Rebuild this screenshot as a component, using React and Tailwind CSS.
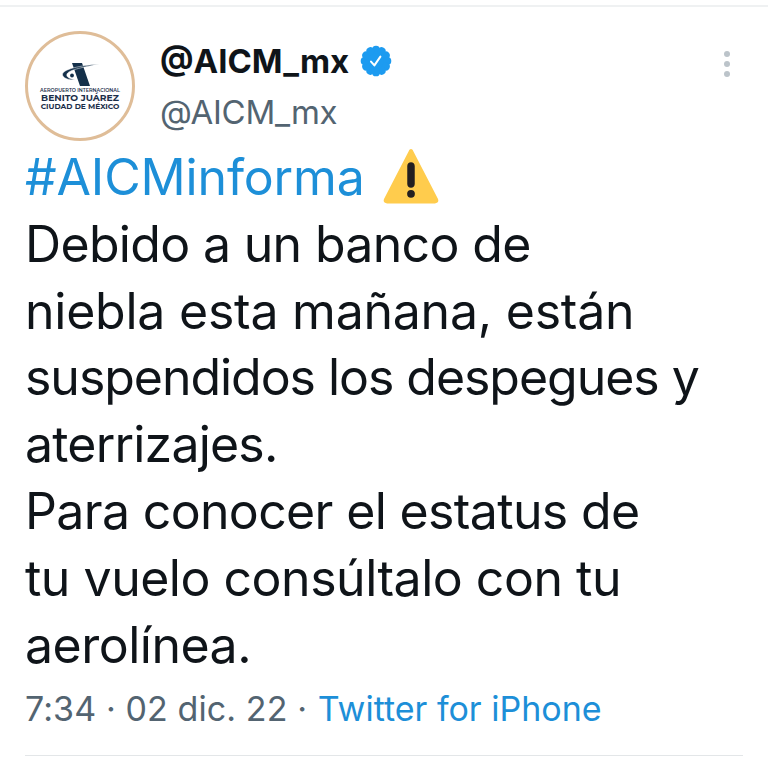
import React from 'react';

const lines = [
    { text: 'Debido a un banco de', tracking: 'tracking-[-0.67px]' },
    { text: 'niebla esta mañana, están', tracking: 'tracking-[-0.24px]' },
    { text: 'suspendidos los despegues y', tracking: 'tracking-[-1.04px]' },
    { text: 'aterrizajes.', tracking: 'tracking-[-0.8px]' },
    { text: 'Para conocer el estatus de', tracking: 'tracking-[-0.65px]' },
    { text: 'tu vuelo consúltalo con tu', tracking: 'tracking-[-0.49px]' },
    { text: 'aerolínea.', tracking: 'tracking-[-0.5px]' },
];

const Avatar = () => (
    <div className="w-[110px] h-[110px] shrink-0 rounded-full border-[3px] border-[#dfbd98] bg-white flex flex-col items-center font-['Montserrat','Inter',sans-serif] text-[#1c2f4a]">
        <svg className="mt-[28px] w-[38px] h-[25px] shrink-0" viewBox="0 0 38 25" fill="#14304a">
            <path d="M11 1h10l8 23H19z" />
            <path d="M38 2C26 3 2 6 1.5 12.5 1.5 16 7 18 14 18 8 16.5 5 15 6 12 8 7.5 24 5 38 2z" stroke="#fff" strokeWidth="0.5" />
            <circle cx="11" cy="13.5" r="1.9" />
        </svg>
        <span className="text-[4.9px] leading-[6px] font-semibold whitespace-nowrap">AEROPUERTO INTERNACIONAL</span>
        <span className="text-[9.2px] leading-[10px] font-bold whitespace-nowrap">BENITO JUÁREZ</span>
        <span className="text-[7.5px] leading-[8px] font-bold whitespace-nowrap">CIUDAD DE MÉXICO</span>
    </div>
);

const petals = [0, 30, 60, 90, 120, 150, 180, 210, 240, 270, 300, 330];

const VerifiedBadge = () => (
    <svg className="w-[32px] h-[32px] shrink-0" viewBox="0 0 32 32" fill="none">
        <g fill="#1d9bf0">
            <circle cx="16" cy="16" r="13" />
            {petals.map((angle) => (
                <circle key={angle} cx="16" cy="4.6" r="3.9" transform={`rotate(${angle} 16 16)`} />
            ))}
        </g>
        <path d="M11 16.6l3.4 3.8 6-8.8" stroke="#fff" strokeWidth="2" strokeLinecap="round" strokeLinejoin="round" />
    </svg>
);

const WarningSign = () => (
    <svg className="w-[56px] h-[56px] shrink-0" viewBox="0 0 36 36">
        <path d="M2.65 35C.81 35-.06 33.66.72 32.03L16.59 1.22c.78-1.63 2.05-1.63 2.82 0L35.28 32.03c.78 1.63-.09 2.97-1.93 2.97H2.65z" fill="#ffcc4d" />
        <path d="M15.5 28.8a2.5 2.5 0 1 1 5 0 2.5 2.5 0 0 1-5 0zM15.6 10.9c0-1.5 1-2.4 2.4-2.4s2.4.9 2.4 2.4v11.6c0 1.5-1 2.4-2.4 2.4s-2.4-.9-2.4-2.4z" fill="#231f20" />
    </svg>
);

const App = () => {
    return (
        <div className="w-[768px] h-[773px] overflow-hidden bg-white font-['Inter',sans-serif] text-[#0f1419]">
            <div className="mt-[5px] h-[2px] bg-[#eff1f2]" />
            <article className="px-[25px]">
                <header className="flex h-[137px] pt-[24px]">
                    <Avatar />
                    <div className="ml-[25px] pt-[5px] flex-1">
                        <div className="flex items-center h-[50px] gap-[11px]">
                            <span className="text-[33px] leading-[48px] font-bold whitespace-nowrap">@AICM_mx</span>
                            <VerifiedBadge />
                        </div>
                        <div className="text-[33px] leading-[52px] tracking-[-0.25px] text-[#536471] whitespace-nowrap">@AICM_mx</div>
                    </div>
                    <div className="flex flex-col gap-[4px] pt-[20px] mr-[13px]">
                        <span className="w-[6px] h-[6px] rounded-full bg-[#bcc4ca]" />
                        <span className="w-[6px] h-[6px] rounded-full bg-[#bcc4ca]" />
                        <span className="w-[6px] h-[6px] rounded-full bg-[#bcc4ca]" />
                    </div>
                </header>

                <div className="text-[50px] leading-[66.8px]">
                    <div className="flex items-center h-[66.8px] whitespace-nowrap">
                        <span className="text-[#1d8fd8] w-[358px] tracking-[-0.15px]">#AICMinforma</span>
                        <WarningSign />
                    </div>
                    {lines.map((line) => (
                        <p key={line.text} className={`h-[66.8px] whitespace-nowrap ${line.tracking}`}>{line.text}</p>
                    ))}
                </div>

                <footer className="h-[78px] pt-px text-[34px] leading-[60px] text-[#536471] whitespace-nowrap border-b border-[#e3e6e8]">
                    <span className="mr-[1px] tracking-[0.1px]">7:34 · 02 dic. 22 · </span>
                    <span className="text-[#1d8fd8]">Twitter for iPhone</span>
                </footer>
            </article>
        </div>
    );
};

export default App;
